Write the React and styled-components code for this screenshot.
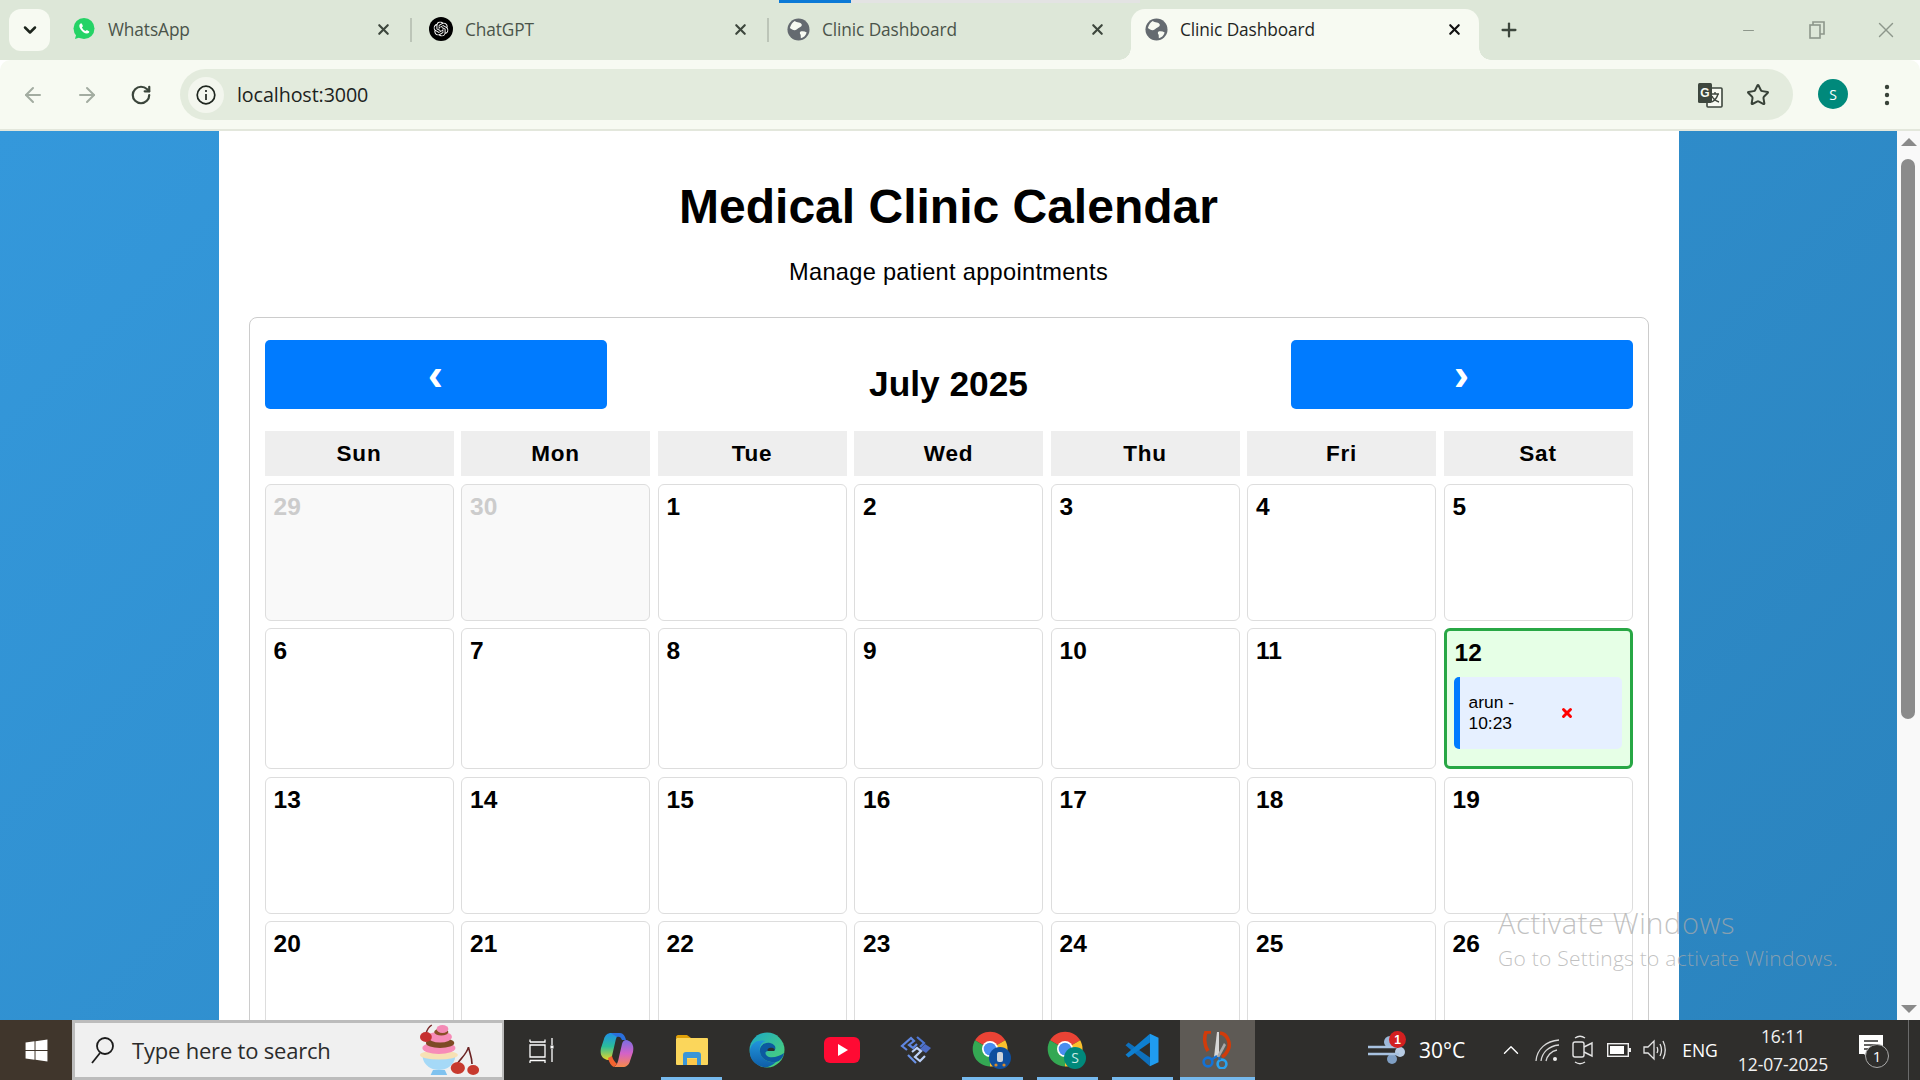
import React from "react";
import styled, { createGlobalStyle } from "styled-components";
import { FaWindows } from "react-icons/fa";
import { SiOpenai } from "react-icons/si";
import { X, Plus, Minus, ArrowLeft, ArrowRight, RotateCw, Star, ChevronDown, ChevronUp } from "lucide-react";

const Global = createGlobalStyle`
  html, body { margin: 0; padding: 0; height: 100%; overflow: hidden; }
  #root { height: 100%; }
  * { box-sizing: border-box; }
`;
const UI = `"Open Sans", "Noto Sans", sans-serif`;

const Screen = styled.div`
  position: relative; width: 1920px; height: 1080px; display: flex; flex-direction: column;
  overflow: hidden; font-family: "Liberation Sans", Arial, sans-serif; background: #fff;
`;
/* ---------- browser chrome ---------- */
const TabStrip = styled.div`
  position: relative; height: 60px; flex: none; background: #dde7d8; display: flex; align-items: flex-start;
  padding: 9px 0 0 9px; font-family: ${UI};
`;
const LoadBar = styled.div`
  position: absolute; left: 779px; top: 0; width: 361px; height: 3px; background: #e3e3e3;
  &::before { content: ""; display: block; width: 72px; height: 3px; background: #0b79d6; }
`;
const TabList = styled.button`
  width: 41px; height: 42px; border: 0; border-radius: 12px; background: #f7faf2; display: flex;
  align-items: center; justify-content: center; padding: 0; margin-right: 5px; color: #1c241c;
`;
const Tab = styled.div`
  position: relative; width: ${p => (p.$active ? 348 : 357)}px; height: ${p => (p.$active ? 51 : 42)}px;
  display: flex; align-items: flex-start; padding: 0 ${p => (p.$active ? 16 : 20)}px 0 ${p => (p.$active ? 13 : 17)}px;
  margin-left: ${p => (p.$active ? 5 : 0)}px; background: ${p => (p.$active ? "#f7faf2" : "transparent")};
  border-radius: 14px 14px 0 0; color: ${p => (p.$active ? "#1f261f" : "#4a544a")};
  ${p => (p.$sep ? `&::after { content: ""; position: absolute; right: 0; top: 9px; width: 2px; height: 24px; background: #bcc5b8; }` : "")}
  ${p => (p.$active ? `
    &::before { content: ""; position: absolute; left: -12px; bottom: 0; width: 12px; height: 12px;
      background: radial-gradient(circle at 0 0, transparent 11.5px, #f7faf2 12px); }
    &::after { content: ""; position: absolute; right: -12px; bottom: 0; width: 12px; height: 12px;
      background: radial-gradient(circle at 100% 0, transparent 11.5px, #f7faf2 12px); }
  ` : "")}
`;
const TabInner = styled.div`
  height: 32px; width: 100%; margin-top: 4px; display: flex; align-items: center; gap: 12px;
`;
const TabIcon = styled.span`
  width: 24px; height: 24px; flex: none; display: flex; align-items: center; justify-content: center;
`;
const TabTitle = styled.span`
  flex: 1; font-size: 17.3px; letter-spacing: -0.1px; font-weight: 400; white-space: nowrap;
`;
const TabClose = styled.span`
  width: 18px; display: flex; justify-content: center; color: ${p => (p.$active ? "#111" : "#3d473d")};
`;
const NewTab = styled.span`
  width: 30px; height: 42px; margin-left: 15px; display: flex; align-items: center; justify-content: center; color: #3d473d; margin-top: 0;
`;
const WindowButtons = styled.div`
  margin-left: auto; display: flex; height: 42px; align-items: center; color: #8d978b;
`;
const WinBtn = styled.span`
  width: ${p => p.$w}px; display: flex; justify-content: center; align-items: center;
`;
const Toolbar = styled.div`
  height: 71px; flex: none; background: #f7faf2; border-bottom: 2px solid #e3e7dc; border-radius: 10px 10px 0 0;
  display: flex; align-items: flex-start; padding: 9px 0 0 0; font-family: ${UI}; margin-top: 0;
`;
const NavGroup = styled.div`
  width: 180px; height: 51px; display: flex; align-items: center; padding-left: 19px; gap: 26px; flex: none;
`;
const NavIcon = styled.span`
  width: 28px; display: flex; justify-content: center; color: ${p => p.$c};
`;
const Omnibox = styled.div`
  width: 1613px; height: 51px; border-radius: 26px; background: #e3ebdd; display: flex; align-items: center; padding: 0 11px 0 8px; flex: none;
`;
const InfoChip = styled.span`
  width: 36px; height: 36px; border-radius: 50%; background: #f3f6ee; display: flex; align-items: center; justify-content: center; margin-right: 13px; flex: none;
`;
const Url = styled.span`
  flex: 1; font-size: 19.7px; letter-spacing: -0.1px; color: #1d231d;
`;
const OmniIcon = styled.span`
  width: 48px; display: flex; justify-content: center; color: #384238;
`;
const Avatar = styled.span`
  width: 30px; height: 30px; border-radius: 50%; background: #00897b; color: #fff; display: flex;
  align-items: center; justify-content: center; font-size: 14px; margin-left: 25px; flex: none; margin-top: 10px;
`;
const DotsWrap = styled.span`
  width: 53px; height: 51px; margin-left: 12px; display: flex; justify-content: center; align-items: center; color: #384238; flex: none;
`;
/* ---------- page ---------- */
const Viewport = styled.div`
  flex: 1; min-height: 0; display: flex; overflow: hidden;
`;
const Page = styled.main`
  flex: 1; min-width: 0; height: 1333px; background: linear-gradient(135deg, #3498db, #2980b9);
`;
const Container = styled.div`
  width: 1460px; height: 100%; margin: 0 auto; background: #fff; padding: 48px 30px 0; text-align: center;
`;
const Title = styled.h1`
  margin: 0; font-size: 48px; line-height: 56px; font-weight: 700; color: #000; letter-spacing: 0;
`;
const Subtitle = styled.p`
  margin: 23px 0 0; font-size: 23.6px; line-height: 28px; color: #000; letter-spacing: 0.3px;
`;
const Panel = styled.section`
  margin-top: 31px; border: 1px solid #ccc; border-radius: 8px; padding: 22px 15px; height: 900px;
`;
const CalHeader = styled.div`
  display: flex; justify-content: space-between; align-items: flex-start; height: 69px;
`;
const NavButton = styled.button`
  width: 342px; height: 69px; border: 0; border-radius: 5px; background: #007bff; color: #fff;
  font-family: inherit; font-size: 46px; font-weight: 700; line-height: 1; padding: 0 0 2px 0;
`;
const Month = styled.h2`
  margin: 24px 0 0; font-size: 35.3px; line-height: 40px; font-weight: 700; color: #000;
`;
const Grid = styled.div`
  display: grid; grid-template-columns: repeat(7, 189px); column-gap: 7.5px; row-gap: 7.5px; margin-top: 22px;
`;
const Weekday = styled.div`
  height: 45px; background: #eee; display: flex; align-items: center; justify-content: center;
  font-size: 22.5px; font-weight: 700; letter-spacing: 0.8px; color: #000;
`;
const Cell = styled.div`
  min-height: 137px; border: ${p => (p.$today ? "3px solid #28a745" : "1px solid #ddd")}; border-radius: 6px;
  padding: 8px; text-align: left; background: ${p => (p.$today ? "#e6ffe6" : p.$muted ? "#f9f9f9" : "#fff")};
`;
const DayNum = styled.div`
  font-size: 24.5px; line-height: 28px; font-weight: 700; color: ${p => (p.$muted ? "#ccc" : "#000")};
  margin-bottom: ${p => (p.$today ? 10 : 0)}px;
`;
const Appointment = styled.div`
  height: 72px; margin: 0 0 9px -1px; width: 168px; border-left: 6px solid #007bff; border-radius: 5px; background: #e6f0ff;
  display: flex; align-items: center; padding-left: 9px;
`;
const ApptText = styled.span`
  width: 91px; font-size: 17.4px; line-height: 21px; color: #000;
`;
const Remove = styled.span`
  display: flex; color: #f00;
`;
const Scrollbar = styled.aside`
  position: relative; width: 23px; flex: none; background: #f9f9f9; display: flex; flex-direction: column; align-items: center; justify-content: space-between; padding: 7px 0;
`;
const Arrow = styled.span`
  width: 0; height: 0; border-left: 8px solid transparent; border-right: 8px solid transparent;
  ${p => (p.$up ? "border-bottom: 8px solid #8a8a8a;" : "border-top: 8px solid #8a8a8a;")}
`;
const Thumb = styled.span`
  position: absolute; left: 4px; top: 28px; width: 14px; height: 560px; border-radius: 7px; background: #8b8b8b;
`;
const Watermark = styled.div`
  position: absolute; left: 1498px; top: 904px; font-family: "Open Sans", sans-serif; font-weight: 300;
  color: rgba(170,170,170,0.72); pointer-events: none; white-space: nowrap;
`;
const WmBig = styled.div`
  font-size: 29px; line-height: 38px; letter-spacing: 0.6px;
`;
const WmSmall = styled.div`
  font-size: 21px; line-height: 28px; margin-top: 2px; letter-spacing: 0.25px;
`;
/* ---------- taskbar ---------- */
const Taskbar = styled.footer`
  height: 60px; flex: none; background: #2f2e2c; display: flex; align-items: stretch; color: #fff; font-family: ${UI};
`;
const Start = styled.div`
  width: 72px; background: #40362c; display: flex; align-items: center; justify-content: center;
`;
const SearchBox = styled.div`
  width: 432px; background: #f0f0f0; border: 3px solid #bcbcbc; border-right-width: 2px; display: flex; align-items: center;
  padding-left: 15px; color: #2b2b2b; font-size: 22px; position: relative;
`;
const SearchText = styled.span`
  margin-left: 16px; letter-spacing: -0.2px;
`;
const Cupcake = styled.span`
  position: absolute; right: 17px; top: 0; display: flex;
`;
const Slot = styled.div`
  position: relative; width: 75.1px; display: flex; align-items: center; justify-content: center;
  background: ${p => (p.$active ? "#5e5a55" : "transparent")};
  ${p => (p.$open ? `&::after { content: ""; position: absolute; left: ${p.$active ? 0 : 7}px; right: ${p.$active ? 0 : 7}px; bottom: 0; height: 3px; background: #76b9ed; }` : "")}
`;
const Tray = styled.div`
  margin-left: auto; display: flex; align-items: center; height: 100%;
`;
const TrayItem = styled.div`
  position: relative; width: ${p => p.$w}px; height: 100%; display: flex; align-items: center; justify-content: center;
  font-size: ${p => p.$fs || 18}px; flex: none; margin-right: ${p => p.$mr || 0}px;
`;
const Badge = styled.span`
  position: absolute; left: 24px; top: 11px; width: 17px; height: 17px; border-radius: 50%; background: #d32020;
  color: #fff; font-size: 12px; font-weight: 700; display: flex; align-items: center; justify-content: center; font-family: "Liberation Sans", sans-serif;
`;
const Clock = styled.div`
  display: flex; flex-direction: column; align-items: center; font-size: 17.5px; line-height: 28px; color: #f2f2f2; letter-spacing: -0.1px;
`;
const NotifCount = styled.span`
  position: absolute; left: 27px; top: 24px; width: 24px; height: 24px; border-radius: 50%; border: 1px solid #aaa; background: #2f2e2c;
  color: #fff; font-size: 15px; display: flex; align-items: center; justify-content: center;
`;
const DesktopEdge = styled.span`
  width: 12px; height: 100%; border-left: 1px solid #6b6b6b; margin-left: 4px; flex: none;
`;

/* ---------- drawn icons ---------- */
const Globe = () => (
  <svg width="23" height="23" viewBox="0 0 24 24"><circle cx="12" cy="12" r="11.5" fill="#646a70" />
    <path d="M8 3 C10 5 15 4 15.5 7 C15.5 9.5 12 10 10 12 C8 14 5 12 3 10.5 C4 7 5.5 4.5 8 3Z M13.5 14.5 C16 13.5 18.5 14 20.5 15 C19.5 18.5 17 20.5 14.5 21 C14 19.5 15 18 13.5 16.5Z" fill="#f7faf2" /></svg>
);
const WhatsAppIcon = () => (
  <svg width="24" height="24" viewBox="0 0 24 24"><circle cx="12" cy="11.5" r="10.5" fill="#25d366" /><path d="M3 22 L4.6 16 L9 20Z" fill="#25d366" />
    <path d="M8.5 6.5 C7 7.5 6.8 9.6 8.4 12 C10 14.5 12.6 16.7 15 16.6 C16.4 16.5 17.3 15.5 17.3 14.5 L14.8 13 L13.7 14.1 C12 13.5 10.6 12 9.9 10.2 L11 9.2 L9.8 6.5Z" fill="#fff" /></svg>
);
const ChatGPTIcon = () => (
  <svg width="24" height="24" viewBox="0 0 24 24"><circle cx="12" cy="12" r="12" fill="#000" /><g transform="translate(4.5 4.5) scale(.625)"><SiOpenai size={24} color="#fff" /></g></svg>
);
const Translate = () => (
  <svg width="28" height="28" viewBox="0 0 28 28">
    <rect x="11" y="7" width="15" height="19" rx="1" fill="#f7faf2" stroke="#3e473e" strokeWidth="1.6" />
    <path d="M15 13h8M19 11v2M22 13c-1 4-3 6-6 8M16 15c1 3 4 5 7 6" stroke="#3e473e" strokeWidth="1.4" fill="none" />
    <rect x="2" y="2" width="14" height="20" rx="1.5" fill="#3e473e" />
    <text x="9" y="16" fontSize="12" fontWeight="700" fill="#f7faf2" textAnchor="middle" fontFamily="Liberation Sans">G</text>
  </svg>
);
const Dots = () => (
  <svg width="6" height="24" viewBox="0 0 6 24"><circle cx="3" cy="4" r="2.2" fill="currentColor" /><circle cx="3" cy="12" r="2.2" fill="currentColor" /><circle cx="3" cy="20" r="2.2" fill="currentColor" /></svg>
);
const Restore = () => (
  <svg width="16" height="18" viewBox="0 0 16 18" fill="none" stroke="currentColor" strokeWidth="1.6"><rect x="1" y="4" width="10" height="13" /><path d="M4 4V1h11v12h-4" /></svg>
);
const InfoIcon = () => (
  <svg width="22" height="22" viewBox="0 0 22 22" fill="none" stroke="#1f261f" strokeWidth="1.7"><circle cx="11" cy="11" r="8.8" /><path d="M11 10v6M11 6v2" /></svg>
);
const SearchIcon = () => (
  <svg width="26" height="30" viewBox="0 0 26 30" fill="none" stroke="#1b1b1b" strokeWidth="1.8"><circle cx="15" cy="11" r="8" /><path d="M10 18 L2 28" /></svg>
);
const CupcakeIcon = () => (
  <svg width="78" height="54" viewBox="0 0 66 54" preserveAspectRatio="none">
    <path d="M21 2 C18 4 17 6 16 11" stroke="#7a2a2a" strokeWidth="1.3" fill="none" />
    <path d="M13 33 H41 C40 43 33 47 27 47 C21 47 14 43 13 33Z" fill="#a5d9f7" />
    <path d="M22 47h10l2 5H20Z" fill="#7fc2ef" />
    <ellipse cx="27" cy="32" rx="16" ry="4.5" fill="#f7e1b5" />
    <ellipse cx="27" cy="25" rx="14" ry="6" fill="#f78cb8" />
    <ellipse cx="28" cy="20" rx="12" ry="5" fill="#7d4a25" />
    <ellipse cx="28" cy="14" rx="10" ry="5.5" fill="#f78cb8" />
    <ellipse cx="29" cy="9" rx="6" ry="3.5" fill="#8a4f27" />
    <ellipse cx="30" cy="6" rx="5" ry="4" fill="#f48ab5" />
    <circle cx="16" cy="14" r="5" fill="#c62f2f" />
    <path d="M52 24 C51 30 46 35 43 40 M52 24 C53 30 55 34 55 41" stroke="#6b2323" strokeWidth="1.4" fill="none" />
    <circle cx="43" cy="45" r="6" fill="#c73a2e" /><circle cx="56" cy="47" r="5" fill="#c73a2e" />
  </svg>
);
const TaskView = () => (
  <svg width="26" height="26" viewBox="0 0 26 26" fill="none" stroke="#fff" strokeWidth="1.3">
    <path d="M1 5V2.5 M1 5H16V2.5 M1 8h15v12H1Z M1 23.5V26M1 23.5H16V26" /><path d="M23 1v7M23 12v13" /><rect x="21.5" y="8.5" width="3" height="3" fill="#fff" stroke="none" />
  </svg>
);
const Copilot = () => (
  <svg width="34" height="36" viewBox="0 0 34 36">
    <defs>
      <linearGradient id="cpA" x1="0" y1="0" x2="0" y2="1"><stop offset="0" stopColor="#1f8fe8" /><stop offset=".5" stopColor="#2bbd9a" /><stop offset="1" stopColor="#e8d52a" /></linearGradient>
      <linearGradient id="cpB" x1="0" y1="0" x2="0" y2="1"><stop offset="0" stopColor="#7a6ee0" /><stop offset=".5" stopColor="#d462c7" /><stop offset="1" stopColor="#f78a4a" /></linearGradient>
    </defs>
    <path d="M11 1 H20 C17 3 16 6 15 11 L12 24 C11 28 8 29 5 27 C1 25 0 21 1 16 L4 7 C5 3 8 1 11 1Z" fill="url(#cpA)" />
    <path d="M23 35 H14 C17 33 18 30 19 25 L22 12 C23 8 26 7 29 9 C33 11 34 15 33 20 L30 29 C29 33 26 35 23 35Z" fill="url(#cpB)" />
    <path d="M11 1 H20 C23 1 25 4 26 8 L22 8 C21 5 19 4 17 5Z" fill="#2a6fdc" /><path d="M8 26 L12 24 C13 28 15 30 17 32 L14 35 C11 34 9 30 8 26Z" fill="#f4632f" />
  </svg>
);
const Folder = () => (
  <svg width="32" height="30" viewBox="0 0 32 30">
    <path d="M0 2 C0 1 1 0 2 0H11L15 3H0Z" fill="#e0a008" /><rect x="0" y="3" width="32" height="27" rx="1" fill="#fbd65b" />
    <path d="M7 30V20 C7 18 8 17 10 17H22 C24 17 25 18 25 20V30H21V23H11V30Z" fill="#3a96d8" /><rect x="11" y="24" width="10" height="6" fill="#fcc74a" />
  </svg>
);
const Edge = () => (
  <svg width="36" height="36" viewBox="0 0 36 36">
    <defs>
      <linearGradient id="edA" x1="0" y1="0" x2="1" y2="1"><stop offset="0" stopColor="#1ba8c9" /><stop offset="1" stopColor="#52d66d" /></linearGradient>
      <linearGradient id="edB" x1="0" y1="0" x2="0" y2="1"><stop offset="0" stopColor="#2196dd" /><stop offset="1" stopColor="#0f5ea8" /></linearGradient>
    </defs>
    <circle cx="18" cy="18" r="17.5" fill="url(#edA)" />
    <path d="M1 18 C2 10 10 7 17 9 C12 10 10 14 11 20 C12 27 19 31 27 30 C23 34 18 36 14 35 C6 33 0 27 1 18Z" fill="url(#edB)" />
    <path d="M11 20 C10 14 15 10 21 11 C26 12 28 16 25 19 L19 19 C15 19 16 24 20 25 C25 26 31 24 35 21 C34 26 31 29 27 30 C19 31 12 27 11 20Z" fill="#0c5aa0" />
    <path d="M19 19 C17 17 21 15 24 16 C26 17 26 18 25 19Z" fill="#2f2e2c" />
  </svg>
);
const YouTube = () => (
  <svg width="36" height="26" viewBox="0 0 36 26"><rect width="36" height="26" rx="6" fill="#ff0a33" /><path d="M14 7 L24 13 L14 19Z" fill="#fff" /></svg>
);
const PsIcon = () => (
  <svg width="34" height="30" viewBox="0 0 34 30" fill="none" strokeWidth="2.2">
    <path d="M7 15 L2 11 L11 3 L14 6 L9 10 L13 13 L17 9" stroke="#5f86e0" />
    <path d="M17 2 L24 8 L20 12" stroke="#4d76d4" />
    <path d="M25 9 L31 13 L26 18 L20 14Z" fill="#4c6bc6" stroke="none" />
    <path d="M12 17 L17 13 L21 16 L15 22 L20 26 L25 21" stroke="#bcd0f7" />
    <path d="M8 20 L16 28" stroke="#6b93e8" />
  </svg>
);
const ChromeBase = ({ children }) => (
  <svg width="40" height="38" viewBox="0 0 40 38">
    <path d="M18 18 L3 9.3 A17.5 17.5 0 0 1 33.2 9.3Z" fill="#ea4335" />
    <path d="M18 18 L33.2 9.3 A17.5 17.5 0 0 1 18 35.5Z" fill="#fbc02d" />
    <path d="M18 18 L18 35.5 A17.5 17.5 0 0 1 3 9.3Z" fill="#34a853" />
    <circle cx="18" cy="18" r="8" fill="#fff" /><circle cx="18" cy="18" r="6.3" fill="#4a8df0" />
    {children}
  </svg>
);
const VSCode = () => (
  <svg width="36" height="36" viewBox="0 0 24 24">
    <polygon points="17.3,22.8 17.3,17 3,7 1,8.8" fill="#0e70bd" />
    <polygon points="17.3,1.2 17.3,7 3,17 1,15.2" fill="#0e7fd0" />
    <polygon points="17.3,1.2 23,3.9 23,20.1 17.3,22.8" fill="#1f9cf0" />
  </svg>
);
const Snip = () => (
  <svg width="30" height="38" viewBox="0 0 30 38" fill="none">
    <path d="M9 1 H4 C2 6 2 14 6 20 M18 2 C26 3 29 13 26 19 C24 23 22 25 20 26" stroke="#d13b0a" strokeWidth="3.6" />
    <path d="M12 26 L15 1 L17 1 L17 26Z" fill="#d7d7d7" /><path d="M15 25 L22 12 L24 14 L17 27Z" fill="#a9a9a9" />
    <circle cx="6" cy="31" r="4.4" stroke="#1372d6" strokeWidth="2.6" /><circle cx="20" cy="33" r="4.4" stroke="#29a2ee" strokeWidth="2.6" />
    <path d="M9 29 L15 25 M18 29 L17 26" stroke="#1372d6" strokeWidth="2.2" />
  </svg>
);
const Weather = () => (
  <svg width="42" height="34" viewBox="0 0 42 34" fill="none">
    <circle cx="23" cy="9" r="6" fill="#9cb8d8" /><circle cx="33" cy="19" r="5" fill="#b7cbe3" /><circle cx="25" cy="26" r="5" fill="#7f9fc4" />
    <path d="M1 14H30M1 21H32" stroke="#a8c2e0" strokeWidth="2.4" />
  </svg>
);
const Wifi = () => (
  <svg width="26" height="24" viewBox="0 0 26 24" fill="none" stroke="#d8d8d8" strokeWidth="1.3">
    <path d="M1 23 C2 11 11 3 24 2 M6 23 C7 15 13 8 24 7 M11 23 C12 18 16 13 22 12" /><circle cx="20" cy="21" r="2" fill="#eee" stroke="none" />
  </svg>
);
const CamTray = () => (
  <svg width="24" height="30" viewBox="0 0 24 30" fill="none" stroke="#e4e4e4" strokeWidth="1.4">
    <rect x="2" y="7" width="11" height="15" rx="2" /><path d="M13 12 L21 8V21L13 17" /><path d="M4 3 C7 1 11 1 14 3 M4 27 C7 29 11 29 14 27" />
  </svg>
);
const Battery = () => (
  <svg width="24" height="14" viewBox="0 0 24 14"><rect x=".7" y=".7" width="20.6" height="12.6" fill="none" stroke="#eee" strokeWidth="1.4" /><rect x="3" y="3" width="14" height="8" fill="#fff" /><rect x="22" y="5" width="2" height="4" fill="#eee" /></svg>
);
const Speaker = () => (
  <svg width="24" height="24" viewBox="0 0 24 24" fill="none" stroke="#e4e4e4" strokeWidth="1.3">
    <path d="M1 9H5L11 3V21L5 15H1Z" /><path d="M14 9 C15 11 15 13 14 15 M17 6 C19 10 19 14 17 18 M20 3 C23 9 23 15 20 21" />
  </svg>
);
const Notif = () => (
  <svg width="24" height="30" viewBox="0 0 24 30"><path d="M0 0H24V19H12L10 24L5 19H0Z" fill="#fff" /><path d="M5 6H19M5 10H19M5 14H19" stroke="#2f2e2c" strokeWidth="1.3" /></svg>
);

const tabs = [
  { icon: <WhatsAppIcon />, title: "WhatsApp", sep: true },
  { icon: <ChatGPTIcon />, title: "ChatGPT", sep: true },
  { icon: <Globe />, title: "Clinic Dashboard" },
  { icon: <Globe />, title: "Clinic Dashboard", active: true },
];
const weekdays = ["Sun", "Mon", "Tue", "Wed", "Thu", "Fri", "Sat"];
const days = [[29, true], [30, true], ...Array.from({ length: 26 }, (_, i) => [i + 1, false])];
const apps = [
  { el: <TaskView /> }, { el: <Copilot /> }, { el: <Folder />, open: true }, { el: <Edge /> }, { el: <YouTube /> }, { el: <PsIcon /> },
  { el: <ChromeBase><circle cx="28" cy="27" r="11" fill="#0f4f9e" /><rect x="25" y="21" width="6" height="10" rx="2" fill="#cfd4da" /><circle cx="24" cy="34" r="1.6" fill="#d88a2b" /><circle cx="32" cy="34" r="1.6" fill="#d88a2b" /></ChromeBase>, open: true },
  { el: <ChromeBase><circle cx="28" cy="27" r="11" fill="#00897b" /><text x="28" y="32" fontSize="14" fill="#c9e9e4" textAnchor="middle" fontFamily="Open Sans">S</text></ChromeBase>, open: true },
  { el: <VSCode />, open: true }, { el: <Snip />, open: true, active: true },
];

export default function App() {
  return (
    <Screen>
      <Global />
      <TabStrip>
        <LoadBar />
        <TabList><ChevronDown size={20} strokeWidth={3} /></TabList>
        {tabs.map((t, i) => (
          <Tab key={i} $active={t.active} $sep={t.sep}>
            <TabInner>
              <TabIcon>{t.icon}</TabIcon>
              <TabTitle>{t.title}</TabTitle>
              <TabClose $active={t.active}><X size={17} strokeWidth={3} /></TabClose>
            </TabInner>
          </Tab>
        ))}
        <NewTab><Plus size={22} strokeWidth={2.5} /></NewTab>
        <WindowButtons>
          <WinBtn $w={68}><Minus size={17} strokeWidth={1.6} /></WinBtn>
          <WinBtn $w={70}><Restore /></WinBtn>
          <WinBtn $w={68}><X size={26} strokeWidth={1.3} /></WinBtn>
        </WindowButtons>
      </TabStrip>
      <Toolbar>
        <NavGroup>
          <NavIcon $c="#a3aca1"><ArrowLeft size={24} strokeWidth={2} /></NavIcon>
          <NavIcon $c="#a3aca1"><ArrowRight size={24} strokeWidth={2} /></NavIcon>
          <NavIcon $c="#3b453b"><RotateCw size={22} strokeWidth={2.4} /></NavIcon>
        </NavGroup>
        <Omnibox>
          <InfoChip><InfoIcon /></InfoChip>
          <Url>localhost:3000</Url>
          <OmniIcon><Translate /></OmniIcon>
          <OmniIcon><Star size={24} strokeWidth={2} /></OmniIcon>
        </Omnibox>
        <Avatar>S</Avatar>
        <DotsWrap><Dots /></DotsWrap>
      </Toolbar>
      <Viewport>
        <Page>
          <Container>
            <Title>Medical Clinic Calendar</Title>
            <Subtitle>Manage patient appointments</Subtitle>
            <Panel>
              <CalHeader>
                <NavButton>‹</NavButton>
                <Month>July 2025</Month>
                <NavButton>›</NavButton>
              </CalHeader>
              <Grid>
                {weekdays.map(d => <Weekday key={d}>{d}</Weekday>)}
                {days.map(([n, muted], i) => {
                  const today = !muted && n === 12;
                  return (
                    <Cell key={i} $muted={muted} $today={today}>
                      <DayNum $muted={muted} $today={today}>{n}</DayNum>
                      {today && (
                        <Appointment>
                          <ApptText>arun - 10:23</ApptText>
                          <Remove><X size={14} strokeWidth={5} /></Remove>
                        </Appointment>
                      )}
                    </Cell>
                  );
                })}
              </Grid>
            </Panel>
          </Container>
        </Page>
        <Scrollbar>
          <Arrow $up />
          <Thumb />
          <Arrow />
        </Scrollbar>
      </Viewport>
      <Taskbar>
        <Start><FaWindows size={25} color="#fff" /></Start>
        <SearchBox>
          <SearchIcon />
          <SearchText>Type here to search</SearchText>
          <Cupcake><CupcakeIcon /></Cupcake>
        </SearchBox>
        {apps.map((a, i) => <Slot key={i} $open={a.open} $active={a.active}>{a.el}</Slot>)}
        <Tray>
          <TrayItem $w={46}><Weather /><Badge>1</Badge></TrayItem>
          <TrayItem $w={62} $fs={21} $mr={19}>30°C</TrayItem>
          <TrayItem $w={38}><ChevronUp size={26} strokeWidth={1.3} /></TrayItem>
          <TrayItem $w={36}><Wifi /></TrayItem>
          <TrayItem $w={34}><CamTray /></TrayItem>
          <TrayItem $w={37}><Battery /></TrayItem>
          <TrayItem $w={35}><Speaker /></TrayItem>
          <TrayItem $w={56} $fs={17.5}>ENG</TrayItem>
          <TrayItem $w={110}><Clock><span>16:11</span><span>12-07-2025</span></Clock></TrayItem>
          <TrayItem $w={66}><Notif /><NotifCount>1</NotifCount></TrayItem>
          <DesktopEdge />
        </Tray>
      </Taskbar>
      <Watermark>
        <WmBig>Activate Windows</WmBig>
        <WmSmall>Go to Settings to activate Windows.</WmSmall>
      </Watermark>
    </Screen>
  );
}
